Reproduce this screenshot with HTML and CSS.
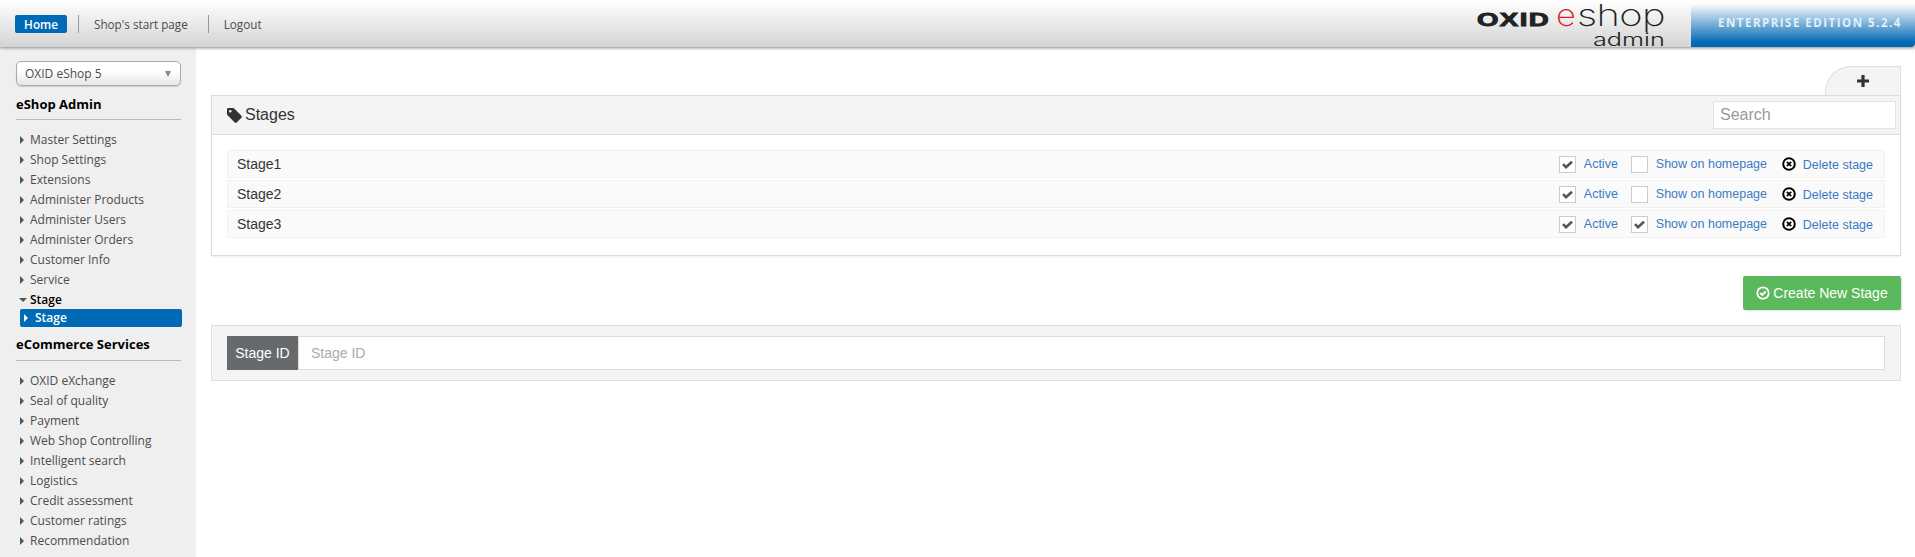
FILE: index.html
```html
<!DOCTYPE html>
<html lang="en">
<head>
  <meta charset="UTF-8">
  <title>OXID eShop admin</title>
  <link rel="stylesheet" href="styles.css">
</head>
<body>
  <div class="topbar">
    <div class="topnav">
      <a class="topnav-home">Home</a>
      <a class="topnav-link">Shop's start page</a>
      <a class="topnav-link">Logout</a>
    </div>
    <div class="logo">
      <div class="logo-line"><span class="logo-oxid">OXID</span><span class="logo-e">e</span><span class="logo-shop">shop</span></div>
      <div class="logo-admin"><span>admin</span></div>
    </div>
    <div class="edition">ENTERPRISE EDITION 5.2.4</div>
  </div>

  <div class="layout">
    <div class="sidebar">
      <div class="shop-select">OXID eShop 5<span class="select-arrow"></span></div>

      <h3 class="side-title">eShop Admin</h3>
      <ul class="side-menu">
        <li>Master Settings</li>
        <li>Shop Settings</li>
        <li>Extensions</li>
        <li>Administer Products</li>
        <li>Administer Users</li>
        <li>Administer Orders</li>
        <li>Customer Info</li>
        <li>Service</li>
        <li class="open">Stage</li>
      </ul>
      <div class="side-sub">Stage</div>

      <h3 class="side-title second">eCommerce Services</h3>
      <ul class="side-menu">
        <li>OXID eXchange</li>
        <li>Seal of quality</li>
        <li>Payment</li>
        <li>Web Shop Controlling</li>
        <li>Intelligent search</li>
        <li>Logistics</li>
        <li>Credit assessment</li>
        <li>Customer ratings</li>
        <li>Recommendation</li>
      </ul>
    </div>

    <div class="content">
      <div class="tabs">
        <div class="tab-add">
          <svg width="12" height="12" viewBox="0 0 12 12"><path d="M4.400 0h3.200v4.400H12v3.200H7.600V12H4.400V7.600H0V4.400h4.400z" fill="#333"/></svg>
        </div>
      </div>

      <div class="panel">
        <div class="panel-head">
          <div class="panel-title">
            <svg width="15" height="15" viewBox="0 0 15 15"><path d="M0 1.400C0 .6.600 0 1.400 0h4.400c.5 0 1 .2 1.400.6l7.200 7.200c.6.600.6 1.400 0 2l-4.700 4.600c-.6.600-1.400.6-2 0L.6 7.200C.2 6.800 0 6.300 0 5.800zM3.300 2a1.300 1.300 0 1 0 0 2.600 1.300 1.300 0 0 0 0-2.600z" fill="#333" fill-rule="evenodd"/></svg>
            Stages
          </div>
          <input class="search" type="text" placeholder="Search">
        </div>
        <div class="panel-body">
          <div class="stage-row">
            <span class="stage-name">Stage1</span>
            <span class="check"><svg width="11" height="9" viewBox="0 0 11 9"><path d="M1 4.200l3 3 6-5.500" fill="none" stroke="#555" stroke-width="2.600"/></svg></span>
            <a class="opt opt-active">Active</a>
            <span class="check"></span>
            <a class="opt opt-home">Show on homepage</a>
            <svg class="del-icon" width="14" height="14" viewBox="0 0 14 14"><circle cx="7" cy="7" r="5.800" fill="#fff" stroke="#000" stroke-width="2"/><path d="M4.800 4.800l4.400 4.400M9.200 4.800l-4.400 4.400" stroke="#000" stroke-width="1.800"/></svg>
            <a class="opt opt-del">Delete stage</a>
          </div>
          <div class="stage-row">
            <span class="stage-name">Stage2</span>
            <span class="check"><svg width="11" height="9" viewBox="0 0 11 9"><path d="M1 4.200l3 3 6-5.500" fill="none" stroke="#555" stroke-width="2.600"/></svg></span>
            <a class="opt opt-active">Active</a>
            <span class="check"></span>
            <a class="opt opt-home">Show on homepage</a>
            <svg class="del-icon" width="14" height="14" viewBox="0 0 14 14"><circle cx="7" cy="7" r="5.800" fill="#fff" stroke="#000" stroke-width="2"/><path d="M4.800 4.800l4.400 4.400M9.200 4.800l-4.400 4.400" stroke="#000" stroke-width="1.800"/></svg>
            <a class="opt opt-del">Delete stage</a>
          </div>
          <div class="stage-row">
            <span class="stage-name">Stage3</span>
            <span class="check"><svg width="11" height="9" viewBox="0 0 11 9"><path d="M1 4.200l3 3 6-5.500" fill="none" stroke="#555" stroke-width="2.600"/></svg></span>
            <a class="opt opt-active">Active</a>
            <span class="check"><svg width="11" height="9" viewBox="0 0 11 9"><path d="M1 4.200l3 3 6-5.500" fill="none" stroke="#555" stroke-width="2.600"/></svg></span>
            <a class="opt opt-home">Show on homepage</a>
            <svg class="del-icon" width="14" height="14" viewBox="0 0 14 14"><circle cx="7" cy="7" r="5.800" fill="#fff" stroke="#000" stroke-width="2"/><path d="M4.800 4.800l4.400 4.400M9.200 4.800l-4.400 4.400" stroke="#000" stroke-width="1.800"/></svg>
            <a class="opt opt-del">Delete stage</a>
          </div>
        </div>
      </div>

      <div class="actions">
        <button class="btn-create">
          <svg width="14" height="14" viewBox="0 0 14 14"><circle cx="7" cy="7" r="5.700" fill="none" stroke="#fff" stroke-width="1.800"/><path d="M4.300 7l2 2 3.500-3.500" fill="none" stroke="#fff" stroke-width="1.900"/></svg>
          Create New Stage
        </button>
      </div>

      <div class="id-panel">
        <div class="id-group">
          <label class="id-label">Stage ID</label>
          <input class="id-input" type="text" placeholder="Stage ID">
        </div>
      </div>
    </div>
  </div>
</body>
</html>
```

FILE: styles.css
```css
* {
  box-sizing: border-box;
}
body {
  margin: 0;
  padding: 0;
  font-family: "Liberation Sans", Arial, sans-serif;
  font-size: 14px;
  color: #333;
  background-color: #fff;
  overflow: hidden;
}

/* top bar */
.topbar {
  display: flex;
  align-items: stretch;
  height: 47px;
  background: linear-gradient(#fff, #d4d4d4);
  box-shadow: 0 1px 3px #888;
  position: relative;
  z-index: 2;
}
.topnav {
  display: flex;
  align-items: center;
  flex: 1;
  padding: 0 0 0 15px;
  font-family: "Open Sans", sans-serif;
  font-size: 11.7px;
  color: #4c4c4c;
}
.topnav-home {
  width: 52px;
  height: 18px;
  line-height: 18px;
  text-align: center;
  color: #fff;
  font-weight: 600;
  background-color: #006ab6;
  border-radius: 2px;
  margin-right: 11px;
}
.topnav-link {
  height: 18px;
  line-height: 18px;
  border-left: 1px solid #999;
  padding: 0 20px 0 15px;
}
.logo {
  width: 186px;
  margin-right: 28px;
  color: #222;
}
.logo-line {
  display: flex;
  align-items: baseline;
  height: 31px;
  line-height: 30px;
}
.logo-oxid {
  display: inline-block;
  font-size: 20px;
  font-weight: bold;
  letter-spacing: 1px;
  width: 79px;
  transform: scaleX(1.38) scaleY(.95);
  transform-origin: left;
  -webkit-text-stroke: 1px #222;
}
.logo-e,
.logo-shop {
  display: inline-block;
  font-family: "Inter", sans-serif;
  font-weight: 200;
  font-size: 30px;
  transform-origin: left;
}
.logo-e {
  width: 17.500px;
  margin-right: 3px;
  color: #dc1c2e;
  transform: scaleX(1.15);
}
.logo-shop {
  width: 62px;
  letter-spacing: -.5px;
  transform: scaleX(1.33);
}
.logo-admin {
  height: 16px;
  line-height: 17px;
  padding-left: 116px;
  font-family: "Inter", sans-serif;
  font-weight: 300;
  font-size: 18px;
}
.logo-admin span {
  display: inline-block;
  transform: scaleX(1.4);
  transform-origin: left;
}
.edition {
  width: 224px;
  margin-top: 5px;
  padding: 10px 0 0 27px;
  font-family: "Open Sans", sans-serif;
  font-weight: 700;
  font-size: 11.5px;
  letter-spacing: 1.5px;
  color: #e2f0fb;
  white-space: nowrap;
  background: linear-gradient(#f4f8fb, #0069b4 90%);
  border-radius: 0 0 4px 0;
}

/* left menu */
.layout {
  display: flex;
  height: 510px;
}
.sidebar {
  width: 196px;
  flex-shrink: 0;
  padding: 14px 15px 0 16px;
  background-color: #efefef;
  font-family: "Open Sans", sans-serif;
  font-size: 12px;
  color: #4c4c4c;
}
.shop-select {
  position: relative;
  height: 25px;
  line-height: 23px;
  padding-left: 8px;
  background: linear-gradient(#fff 40%, #e6e6e6);
  border: 1px solid #aaa;
  border-radius: 5px;
  box-shadow: 0 1px 1px #ccc;
}
.select-arrow {
  position: absolute;
  right: 9px;
  top: 9px;
  border-top: 6px solid #888;
  border-left: 3.500px solid transparent;
  border-right: 3.500px solid transparent;
}
.side-title {
  margin: 0;
  padding: 9px 0 7px;
  height: 34px;
  line-height: 18px;
  font-size: 13px;
  font-weight: 700;
  color: #000;
  border-bottom: 1px solid #bbb;
}
.side-title.second {
  height: 34px;
  margin-top: 0;
  padding-top: 8px;
}
.side-menu {
  list-style: none;
  margin: 0;
  padding: 10px 0 0 0;
}
.side-menu li {
  position: relative;
  height: 20px;
  line-height: 20px;
  padding-left: 14px;
  white-space: nowrap;
}
.side-menu li::before {
  content: "";
  position: absolute;
  left: 4px;
  top: 6px;
  border-left: 4px solid #555;
  border-top: 4px solid transparent;
  border-bottom: 4px solid transparent;
}
.side-menu li.open {
  height: 19px;
  color: #000;
  font-weight: 600;
}
.side-menu li.open::before {
  left: 3px;
  top: 8px;
  border-top: 4px solid #555;
  border-left: 4px solid transparent;
  border-right: 4px solid transparent;
  border-bottom: 0;
}
.side-sub {
  position: relative;
  width: 162px;
  height: 18px;
  line-height: 18px;
  margin-left: 4px;
  padding-left: 15px;
  font-weight: 600;
  color: #fff;
  background-color: #006ab6;
  border-radius: 2px;
}
.side-sub::before {
  content: "";
  position: absolute;
  left: 4px;
  top: 5px;
  border-left: 4px solid #fff;
  border-top: 4px solid transparent;
  border-bottom: 4px solid transparent;
}

/* main area */
.content {
  flex: 1;
  padding: 19px 14px 0 15px;
}
.tabs {
  display: flex;
  justify-content: flex-end;
  height: 29px;
}
.tab-add {
  display: flex;
  align-items: center;
  justify-content: center;
  width: 76px;
  height: 29px;
  background-color: #f4f4f4;
  border: 1px solid #ddd;
  border-bottom: 0;
  border-radius: 26px 0 0 0;
}
.panel {
  height: 161px;
  border: 1px solid #ddd;
  box-shadow: 0 1px 2px #eee;
}
.panel-head {
  display: flex;
  align-items: center;
  justify-content: space-between;
  height: 39px;
  padding: 0 4px 0 15px;
  background-color: #f4f4f4;
  border-bottom: 1px solid #ddd;
}
.panel-title {
  display: flex;
  align-items: center;
  gap: 3px;
  font-size: 16px;
  color: #333;
}
.search {
  width: 183px;
  height: 28px;
  padding: 0 6px;
  font: 16px "Liberation Sans", Arial, sans-serif;
  border: 1px solid #e4e4e4;
  outline: none;
}
.search::placeholder {
  color: #999;
}
.panel-body {
  padding: 15px 15px 0;
}
.stage-row {
  display: flex;
  align-items: center;
  height: 28px;
  margin-bottom: 2px;
  padding: 0 11px 0 9px;
  background-color: #fafafa;
  border: 1px solid #f1f1f1;
}
.stage-name {
  flex: 1;
  color: #333;
}
.check {
  display: flex;
  align-items: center;
  justify-content: center;
  width: 17px;
  height: 17px;
  background-color: #fff;
  border: 1px solid #ccc;
}
.opt {
  font-size: 12.500px;
  color: #3a7bc4;
  margin-bottom: 1px;
}
.opt-active {
  width: 55px;
  padding-left: 8px;
}
.opt-home {
  width: 134px;
  padding-left: 8px;
}
.del-icon {
  margin: 0 7px 0 0;
}
.opt-del {
  margin: 2px 0 0 0;
}

.actions {
  display: flex;
  justify-content: flex-end;
  padding: 20px 0 15px;
}
.btn-create {
  display: flex;
  align-items: center;
  justify-content: center;
  gap: 3px;
  width: 158px;
  height: 34px;
  padding: 0;
  font: 14px "Liberation Sans", Arial, sans-serif;
  color: #fff;
  background-color: #5cb85c;
  border: none;
  border-radius: 2px;
  box-shadow: 1px 1px 2px #ddd;
}
.id-panel {
  height: 56px;
  padding: 10px 15px;
  background-color: #f4f4f4;
  border: 1px solid #ddd;
}
.id-group {
  display: flex;
  height: 34px;
}
.id-label {
  width: 71px;
  line-height: 34px;
  text-align: center;
  color: #fff;
  background-color: #666a6c;
}
.id-input {
  flex: 1;
  padding: 0 12px;
  font: 14px "Liberation Sans", Arial, sans-serif;
  border: 1px solid #ddd;
  outline: none;
}
.id-input::placeholder {
  color: #aaa;
}
```
